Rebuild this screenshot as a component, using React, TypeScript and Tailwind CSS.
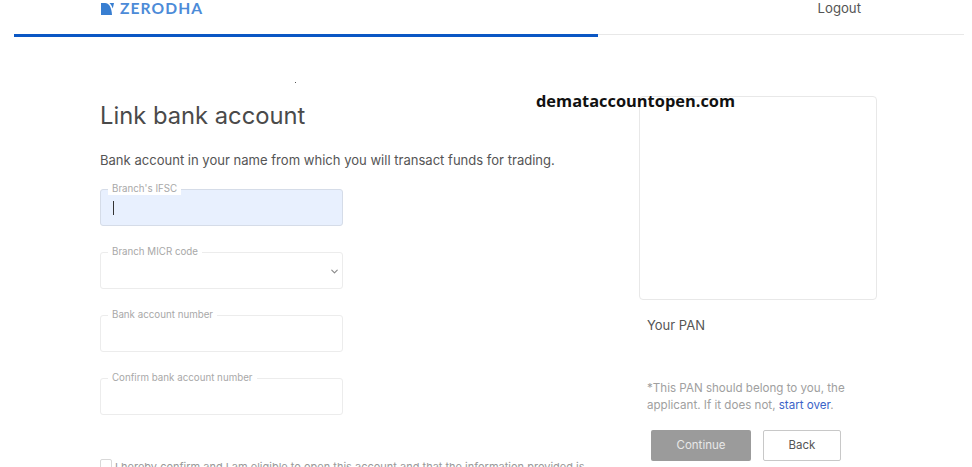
import React from 'react';
import { ChevronDown } from 'lucide-react';

const inter = "font-['Inter',sans-serif]";

const Field = ({ label, active, select }: { label: string; active?: boolean; select?: boolean }) => (
  <div className={`relative h-[37px] w-[243px] rounded-[3px] border ${active ? 'border-[#d5dce8] bg-[#e8f0fe]' : 'border-[#ececec] bg-white'}`}>
    <span className="absolute left-[7px] top-[-8px] bg-white px-[4px] text-[9.75px] leading-[13px] text-[#a8a8a8]">{label}</span>
    {active && <span className="absolute left-[12px] top-[11px] h-[14px] w-px bg-[#333]" />}
    {select && <ChevronDown size={11} strokeWidth={2.5} className="absolute right-[2px] top-[13px] text-[#8a8a8a]" />}
  </div>
);

export default function App() {
  return (
    <div className={`relative h-[467px] w-[972px] overflow-hidden bg-white ${inter}`}>
      <header className="flex h-[34px] items-start justify-between pl-[101px] pr-[111px]">
        <div className="flex items-center gap-[6px] pt-[2px]">
          <svg width="13" height="12" viewBox="0 0 13 12">
            <path d="M0 0H4C8 0 10.5 4 11 12H0Z" fill="#387ed1" />
            <path d="M8.5 0H13L11.8 5.5C11 3.2 10 1.5 8.5 0Z" fill="#387ed1" />
          </svg>
          <span className="font-['Lato',sans-serif] text-[15.6px] font-bold leading-[13px] tracking-[1.1px] text-[#4c8bd8]">ZERODHA</span>
        </div>
        <a className="text-[13.2px] leading-[16px] text-[#555]">Logout</a>
      </header>

      <div className="ml-[14px] flex h-[4px] w-[950px] items-start">
        <div className="h-[3px] w-[584px] bg-[#0b57c4]" />
        <div className="h-px flex-1 bg-[#e8e8e8]" />
      </div>

      {/* stray speck in the screenshot */}
      <span className="absolute left-[295px] top-[82px] h-px w-px bg-[#555]" />

      <main className="flex pl-[100px] pt-[58px]">
        <section className="w-[539px]">
          <h1 className="pt-[4px] text-[23.75px] font-normal leading-[32px] text-[#4a4a4a]">Link bank account</h1>
          <p className="mt-[19px] text-[13.05px] leading-[18px] text-[#555]">Bank account in your name from which you will transact funds for trading.</p>
          <div className="mt-[20px] flex flex-col gap-[26px]">
            <Field label="Branch's IFSC" active />
            <Field label="Branch MICR code" select />
            <Field label="Bank account number" />
            <Field label="Confirm bank account number" />
          </div>
          <label className="mt-[44px] flex items-start gap-[3px] whitespace-nowrap text-[11px] leading-[14px] text-[#9a9a9a]">
            <span className="h-[12px] w-[12px] shrink-0 rounded-[2px] border border-[#d8d8d8]" />
            <span className="pt-[1px]">I hereby confirm and I am eligible to open this account and that the information provided is</span>
          </label>
        </section>

        <aside className="relative w-[238px]">
          <div className="h-[204px] rounded-[4px] border border-[#e8e8e8]" />
          <p className="mt-[16px] pl-[8px] text-[13px] leading-[18px] text-[#555]">Your PAN</p>
          <p className="mt-[46px] pl-[8px] text-[11.6px] leading-[17px] text-[#a0a0a0]">
            *This PAN should belong to you, the applicant. If it does not, <a className="text-[#3a63c8]">start over</a>.
          </p>
          <div className="mt-[16px] flex gap-[12px] pl-[12px]">
            <button className="h-[31px] w-[100px] rounded-[2px] bg-[#9b9b9b] text-[11.5px] text-[#e8e8e8]">Continue</button>
            <button className="h-[31px] w-[78px] rounded-[2px] border border-[#c8c8c8] bg-white text-[11.5px] text-[#555]">Back</button>
          </div>
          <span className="absolute left-[-103px] top-[-6px] font-['Open_Sans',sans-serif] text-[16.4px] font-bold leading-[22px] text-[#111]">demataccountopen.com</span>
        </aside>
      </main>
    </div>
  );
}
